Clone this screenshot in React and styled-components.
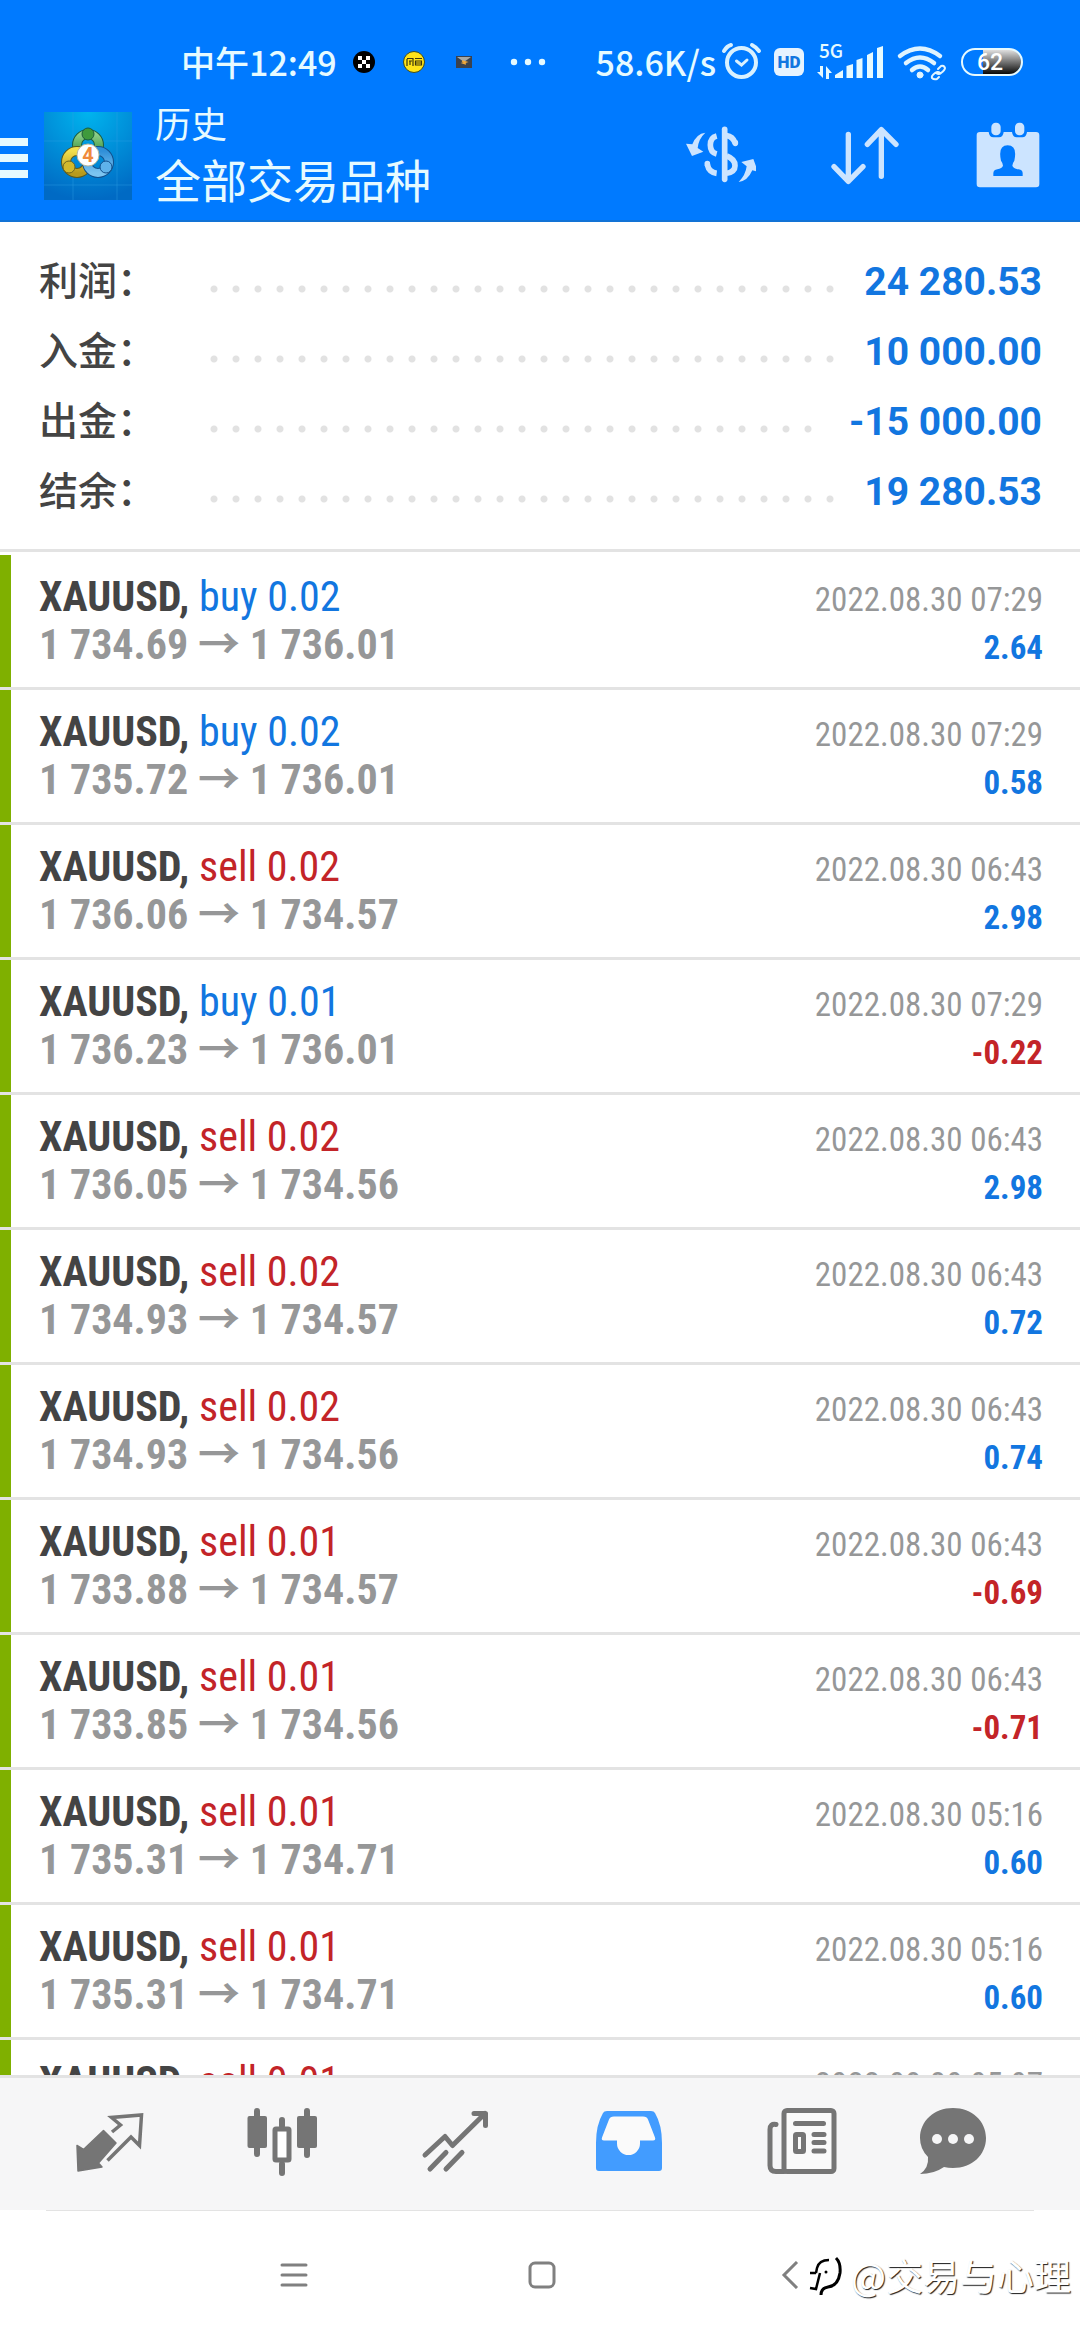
import React from 'react';
import styled, { createGlobalStyle } from 'styled-components';

const GlobalStyle = createGlobalStyle`
    * {
        box-sizing: border-box;
    }

    body {
        margin: 0;
        background: #fff;
        font-family: Roboto, 'Noto Sans CJK SC', sans-serif;
    }

    button {
        margin: 0;
        padding: 0;
        border: 0;
        background: none;
        color: inherit;
        font: inherit;
    }
`;

const Screen = styled.div`
    position: relative;
    display: flex;
    flex-direction: column;
    width: 100%;
    height: 100vh;
    overflow: hidden;
`;

const Header = styled.header`
    flex: none;
    background: #007aff;
    box-shadow: inset 0 -2px #1273d6;
    color: #e6faff;
`;

const StatusBar = styled.div`
    display: flex;
    align-items: center;
    height: 90px;
    padding: 34px 57px 0 181px;
    font-family: 'Noto Sans CJK SC', sans-serif;
    font-size: 34px;
    font-weight: 500;
    line-height: 56px;
    white-space: nowrap;
`;

const Notifications = styled.div`
    display: flex;
    align-items: center;
    gap: 28px;
    margin-left: 16px;
`;

const Speed = styled.span`
    margin: 0 4px 0 auto;
`;

const StatusIcons = styled.div`
    display: flex;
    align-items: center;
    gap: 12px;

    svg {
        overflow: visible;
    }
`;

const Toolbar = styled.div`
    display: flex;
    align-items: center;
    height: 132px;
`;

const MenuButton = styled.button`
    display: flex;
    flex-direction: column;
    gap: 8px;
    width: 28px;
    margin: 4px 16px 0 0;
`;

const MenuBar = styled.span`
    height: 8px;
    background: #e6faff;
`;

const Titles = styled.div`
    flex: 1;
    padding: 0 0 4px 23px;
`;

const Section = styled.div`
    font-size: 36px;
    line-height: 56px;
`;

const Heading = styled.h1`
    margin: 0;
    font-size: 46px;
    font-weight: 400;
    line-height: 56px;
`;

const ToolButton = styled.button`
    display: flex;
    justify-content: center;
    width: 144px;
    color: #cce4ff;
`;

const Summary = styled.dl`
    flex: none;
    margin: 0;
    padding: 24px 38px 23px 39px;
    border-bottom: 3px solid #e3e3e3;
`;

const SummaryRow = styled.div`
    display: flex;
    align-items: center;
    height: 70px;
    padding-top: 2px;
    font-size: 39px;
    line-height: 56px;
`;

const SummaryLabel = styled.dt`
    width: 164px;
    padding-bottom: 8px;
    color: #444;
    font-family: 'Noto Sans CJK SC', sans-serif;
    font-weight: 500;
`;

const Leader = styled.span`
    flex: 1;
    height: 8px;
    margin: 14px 28px 0 0;
    background: radial-gradient(circle at center, #e2e2e2 3px, transparent 4px) 0 0 / 22px 8px repeat-x;
`;

const SummaryValue = styled.dd`
    margin: 0;
    color: #1276e0;
    font-weight: 700;
`;

const DealList = styled.ul`
    flex: 1;
    min-height: 0;
    margin: 0;
    padding: 3px 0 0;
    overflow: hidden;
    list-style: none;
`;

const Deal = styled.li`
    display: flex;
    justify-content: space-between;
    height: 135px;
    padding: 18px 37px 0 39px;
    border-bottom: 3px solid #e3e3e3;
    box-shadow: inset 11px 0 #7fb000;
    font-family: 'Roboto Condensed', Roboto, 'Noto Sans CJK SC', sans-serif;
    white-space: nowrap;
`;

const DealTitle = styled.div`
    color: #444;
    font-size: 42px;
    font-weight: 700;
    line-height: 48px;
`;

const Side = styled.span`
    color: ${({ $side }) => ($side === 'buy' ? '#1276e0' : '#c32428')};
    font-weight: 400;
`;

const Prices = styled.div`
    color: #969798;
    font-size: 42px;
    font-weight: 700;
    line-height: 48px;
`;

const DealResult = styled.div`
    padding-top: 3px;
    color: #969798;
    font-size: 33px;
    line-height: 48px;
    text-align: right;
`;

const Profit = styled.div`
    color: ${({ $loss }) => ($loss ? '#c32428' : '#1276e0')};
    font-weight: 700;
`;

const Tabs = styled.nav`
    display: grid;
    flex: none;
    grid-template-columns: repeat(5, 173fr) 132fr;
    height: 135px;
    padding: 0 61px 0 22px;
    border-top: 3px solid #e3e3e3;
    background: #f6f6f7;
`;

const Tab = styled.button`
    display: flex;
    justify-content: center;
    align-items: center;
    color: ${({ $active }) => ($active ? '#429cff' : '#757575')};
`;

const SystemNav = styled.nav`
    display: flex;
    flex: none;
    justify-content: center;
    height: 130px;
    padding-left: 3px;
    background: linear-gradient(#e3e3e3, #e3e3e3) center top / calc(100% - 92px) 1px no-repeat;
`;

const SystemButton = styled.button`
    display: flex;
    justify-content: center;
    align-items: center;
    width: 248px;
    color: #808080;
`;

const Watermark = styled.div`
    position: absolute;
    right: 9px;
    bottom: 37px;
    display: flex;
    align-items: center;
    gap: 8px;
    color: #fff;
    font-family: 'Noto Sans CJK SC', sans-serif;
    font-size: 37px;
    line-height: 56px;
    text-shadow: 1px 1px 1px rgba(0, 0, 0, 0.9);
`;

const summary = [
    ['利润', '24 280.53'],
    ['入金', '10 000.00'],
    ['出金', '-15 000.00'],
    ['结余', '19 280.53'],
];

const deals = [
    { side: 'buy', lots: '0.02', from: '1 734.69', to: '1 736.01', time: '2022.08.30 07:29', profit: '2.64' },
    { side: 'buy', lots: '0.02', from: '1 735.72', to: '1 736.01', time: '2022.08.30 07:29', profit: '0.58' },
    { side: 'sell', lots: '0.02', from: '1 736.06', to: '1 734.57', time: '2022.08.30 06:43', profit: '2.98' },
    { side: 'buy', lots: '0.01', from: '1 736.23', to: '1 736.01', time: '2022.08.30 07:29', profit: '-0.22' },
    { side: 'sell', lots: '0.02', from: '1 736.05', to: '1 734.56', time: '2022.08.30 06:43', profit: '2.98' },
    { side: 'sell', lots: '0.02', from: '1 734.93', to: '1 734.57', time: '2022.08.30 06:43', profit: '0.72' },
    { side: 'sell', lots: '0.02', from: '1 734.93', to: '1 734.56', time: '2022.08.30 06:43', profit: '0.74' },
    { side: 'sell', lots: '0.01', from: '1 733.88', to: '1 734.57', time: '2022.08.30 06:43', profit: '-0.69' },
    { side: 'sell', lots: '0.01', from: '1 733.85', to: '1 734.56', time: '2022.08.30 06:43', profit: '-0.71' },
    { side: 'sell', lots: '0.01', from: '1 735.31', to: '1 734.71', time: '2022.08.30 05:16', profit: '0.60' },
    { side: 'sell', lots: '0.01', from: '1 735.31', to: '1 734.71', time: '2022.08.30 05:16', profit: '0.60' },
    { side: 'sell', lots: '0.01', from: '', to: '', time: '2022.08.30 05:07', profit: '' },
];

const NotificationIcons = () => (
    <Notifications>
        <svg width="22" height="22" viewBox="0 0 22 22">
            <circle cx="11" cy="11" r="11" fill="#000" />
            <path d="M5 5h4v4H5zM13 5h4v4h-4zM9 9h4v4H9zM5 13h4v4H5zM13 13h4v4h-4z" fill="#fff" />
        </svg>
        <svg width="22" height="22" viewBox="0 0 22 22">
            <circle cx="11" cy="11" r="10.5" fill="#ffe31a" stroke="#3c4a20" />
            <path
                d="M4 8v7M4 7.500h6V15M6 10h3M7 10v4M12 7.500h7M12.500 10h6v4h-6zM13 12h5"
                fill="none"
                stroke="#3a3510"
                strokeWidth="1.200"
            />
        </svg>
        <svg width="22" height="22" viewBox="0 0 22 22">
            <path d="M3 5h16v12H3z" fill="#3b424e" />
            <path d="M4 6h14l-7 5z" fill="#a7a9a6" />
            <path d="M9 10l4 1-3 1 3 1" fill="none" stroke="#f0a83a" strokeWidth="1.500" />
        </svg>
        <svg width="50" height="8" viewBox="0 0 50 8" fill="#e6faff">
            <circle cx="11" cy="4" r="3.200" />
            <circle cx="25" cy="4" r="3.200" />
            <circle cx="39" cy="4" r="3.200" />
        </svg>
    </Notifications>
);

const AlarmIcon = () => (
    <svg width="42" height="40" viewBox="720 43 42 40" fill="none" stroke="#d9f1ff" strokeWidth="4" strokeLinecap="round">
        <circle cx="741.500" cy="63.500" r="14.500" />
        <path d="M724 52q3-5 7-6M752 46q4 2 7 6" />
        <path d="M736.500 62l5 4 5.500-5" strokeWidth="3" />
    </svg>
);

const HdIcon = () => (
    <svg width="31" height="30" viewBox="0 0 31 30">
        <rect x="0" y="1" width="30" height="28" rx="6" fill="#e6f3ff" />
        <text x="15" y="21" textAnchor="middle" fontFamily="Roboto" fontSize="17" fontWeight="900" fill="#1276e0">HD</text>
    </svg>
);

const SignalIcon = () => (
    <svg width="68" height="40" viewBox="817 42 68 40" fill="#e6faff">
        <text x="819" y="58" fontFamily="Noto Sans CJK SC" fontSize="19" fontWeight="500">5G</text>
        <path d="M820 66h3v12l-6-6h3zM826 79V66l6 7h-3v6z" />
        <path d="M835 75l8-5v8h-8zM846.500 66l6.500-2v14h-6.500zM856.500 60l6-2v20h-6zM867 55l6-3v26h-6zM877 48l6-2v32h-6z" />
    </svg>
);

const WifiIcon = () => (
    <svg width="52" height="40" viewBox="897 42 52 40" fill="none" stroke="#e0f4ff" strokeLinecap="round">
        <path d="M900 56q20-15 40 0M906 63q14-11 28 0M912 70q8-7 16 0" strokeWidth="4.500" />
        <circle cx="920" cy="75" r="3" fill="#e0f4ff" />
        <path
            d="M938 69l3-3q3-1 4 2 0 2-4 5-2 2-5 0M940 73q-2-2-5 0-4 3-3 5 2 2 5 1l2-2"
            strokeWidth="2"
        />
    </svg>
);

const BatteryIcon = () => (
    <svg width="62" height="30" viewBox="0 0 62 30">
        <defs>
            <linearGradient id="charge" x1="0" y1="0" x2="0" y2="1">
                <stop offset="0" stopColor="#e8e8e8" />
                <stop offset="1" stopColor="#000" />
            </linearGradient>
        </defs>
        <path d="M22 2h25a13 13 0 0 1 0 26H22z" fill="url(#charge)" />
        <rect x="1" y="2" width="60" height="26" rx="13" fill="none" stroke="#e6faff" strokeWidth="2" />
        <text x="29" y="23" textAnchor="middle" fontFamily="Roboto" fontSize="23" fontWeight="500" fill="#fff">62</text>
    </svg>
);

const AppLogo = () => (
    <svg width="88" height="88" viewBox="0 0 88 88">
        <defs>
            <radialGradient id="logoSky" cx="0.500" cy="0" r="1">
                <stop offset="0" stopColor="#00b4ee" />
                <stop offset="1" stopColor="#006ac4" />
            </radialGradient>
            <linearGradient id="logoGreen" x1="0" y1="0" x2="0" y2="1">
                <stop offset="0" stopColor="#8ed08a" />
                <stop offset="1" stopColor="#2e8a34" />
            </linearGradient>
            <linearGradient id="logoYellow" x1="0" y1="0" x2="0" y2="1">
                <stop offset="0" stopColor="#f2df4e" />
                <stop offset="1" stopColor="#b79a1c" />
            </linearGradient>
            <linearGradient id="logoBlue" x1="0" y1="0" x2="0" y2="1">
                <stop offset="0" stopColor="#2f8fd8" />
                <stop offset="1" stopColor="#7cc4f0" />
            </linearGradient>
        </defs>
        <rect width="88" height="88" fill="url(#logoSky)" />
        <path d="M29 0v88M73 0v88M0 29h88M0 73h88" stroke="#2fa0e8" strokeOpacity="0.400" />
        <circle cx="44" cy="33" r="11" fill="none" stroke="#1d5c3c" strokeWidth="10" />
        <circle cx="44" cy="33" r="11" fill="none" stroke="url(#logoGreen)" strokeWidth="8" />
        <circle cx="33" cy="50" r="11" fill="none" stroke="#5b5a1c" strokeWidth="10" />
        <circle cx="33" cy="50" r="11" fill="none" stroke="url(#logoYellow)" strokeWidth="8" />
        <circle cx="54" cy="50" r="11" fill="none" stroke="#12508c" strokeWidth="10" />
        <circle cx="54" cy="50" r="11" fill="none" stroke="url(#logoBlue)" strokeWidth="8" />
        <circle cx="44" cy="22" r="6" fill="#3f9a3c" stroke="#1d5c3c" />
        <circle cx="25" cy="55" r="6" fill="#d2b92c" stroke="#6b6420" />
        <circle cx="62" cy="55" r="6" fill="#5fb2ea" stroke="#12508c" />
        <circle cx="44" cy="43" r="11" fill="#fff" stroke="#b8b8a0" />
        <text x="44" y="50" textAnchor="middle" fontFamily="Roboto" fontSize="20" fontWeight="700" fill="#f08a3c">4</text>
    </svg>
);

const CurrencyIcon = () => (
    <svg width="72" height="72" viewBox="42 60 216 216" fill="none" stroke="currentColor">
        <path d="M164 88v150" strokeWidth="17" strokeLinecap="round" />
        <path d="M140 108q-19 5-19 27t19 27" strokeWidth="17" />
        <path d="M112 194q5 23 28 26" strokeWidth="17" />
        <path d="M112 191v2M196 128v2" strokeWidth="17" strokeLinecap="round" />
        <path d="M170 107q18 2 26 23M170 168q25 9 25 29 0 18-25 23" strokeWidth="17" />
        <path d="M106 98q-27 3-39 35l-19-2 18 37 34-13-17-11q3-28 23-46z" fill="currentColor" stroke="none" />
        <path d="M206 246q27-3 41-35l17 4-14-38-36 9 16 13q-3 26-24 47z" fill="currentColor" stroke="none" />
    </svg>
);

const SortIcon = () => (
    <svg
        width="72"
        height="72"
        viewBox="474 60 216 216"
        fill="none"
        stroke="currentColor"
        strokeWidth="16"
        strokeLinecap="round"
        strokeLinejoin="round"
    >
        <path d="M535 103v141M492 200l43 44 44-44M634 229V89M592 133l42-44 44 44" />
    </svg>
);

const CalendarIcon = () => (
    <svg width="72" height="72" viewBox="906 60 216 216" fill="currentColor">
        <rect x="964" y="68" width="28" height="38" rx="13" />
        <rect x="1035" y="68" width="28" height="38" rx="13" />
        <path
            fillRule="evenodd"
            d="M930 96h26q2 16 14 16h17q12 0 14-16h25q2 16 14 16h17q12 0 14-16h27q10 0 10 10v146q0 10-10 10H930q-10 0-10-10V106q0-10 10-10zM970 228h88v-8q0-10-12-12-16-3-19-11 0-7 6-15 10-46-20-46t-20 46q6 8 6 15-3 8-17 11-12 2-12 12z"
        />
    </svg>
);

const QuotesIcon = () => (
    <svg width="72" height="72" viewBox="72 2108 72 72">
        <path
            d="M76 2145.500l6.500 4 20-19 12.500 12.500-17.500 20 3.500 4-24 4z"
            fill="currentColor"
            stroke="currentColor"
            strokeWidth="1.500"
            strokeLinejoin="round"
        />
        <path
            d="M111 2132l8.500-7-9-7.500 30-2.500-2 30.500-8.500-8.500-23.500 23.500"
            fill="none"
            stroke="currentColor"
            strokeWidth="3.500"
            strokeLinejoin="miter"
        />
    </svg>
);

const ChartIcon = () => (
    <svg width="72" height="72" viewBox="245 2108 72 72" fill="none" stroke="currentColor" strokeWidth="6" strokeLinecap="round">
        <path d="M256 2111v43M306 2111v44M281 2120v6M281 2164v9" />
        <rect x="246.500" y="2116" width="19.500" height="32" rx="2" fill="currentColor" stroke="none" />
        <rect x="296" y="2116" width="20" height="32" rx="2" fill="currentColor" stroke="none" />
        <rect x="274" y="2129" width="14" height="31" strokeWidth="5" rx="1" fill="#fff" />
    </svg>
);

const TrendIcon = () => (
    <svg
        width="72"
        height="72"
        viewBox="418 2108 72 72"
        fill="none"
        stroke="currentColor"
        strokeWidth="5"
        strokeLinecap="round"
        strokeLinejoin="round"
    >
        <path d="M424 2155l20-18.500 7.500 9L484 2113.500M473 2113.500h11.500v12M429 2169l16-16.500M445 2169l16-16.500" />
    </svg>
);

const InboxIcon = () => (
    <svg width="72" height="72" viewBox="591 2108 72 72">
        <path
            d="M606 2111h44q3 0 4 2 7 12 7 30v25q0 3-3 3h-60q-3 0-3-3v-25q0-18 7-30 1-2 4-2z"
            fill="currentColor"
        />
        <path
            d="M613 2116.500h29q4 0 5 3l7 18q1 3-2 3h-13v3a11.500 11.500 0 0 1-23 0v-3h-13q-3 0-2-3l7-18q1-3 5-3z"
            fill="#fafafa"
        />
    </svg>
);

const NewsIcon = () => (
    <svg width="72" height="72" viewBox="764 2108 72 72" fill="none" stroke="currentColor" strokeWidth="5" strokeLinecap="round">
        <path d="M775 2124.500q-6-1-6 5v36q0 6 6 6h8" />
        <rect x="783" y="2110.500" width="50" height="61" rx="3" fill="#fafafa" />
        <path d="M794.500 2123.500h28M813 2134.500h10M813 2142.500h10M813 2151h10" />
        <rect x="794.500" y="2134.500" width="8" height="17" rx="1" />
    </svg>
);

const ChatIcon = () => (
    <svg width="72" height="72" viewBox="917 2108 72 72">
        <path
            d="M953 2108c19 0 33 13 33 30s-14 30-33 30q-5 0-9-1-10 7-24 7 9-6 8-17-8-8-8-19c0-17 14-30 33-30z"
            fill="currentColor"
        />
        <g fill="#f6f6f7">
            <circle cx="937" cy="2139" r="5" />
            <circle cx="953" cy="2139" r="5" />
            <circle cx="969" cy="2139" r="5" />
        </g>
    </svg>
);

const tabs = [
    ['行情', QuotesIcon],
    ['图表', ChartIcon],
    ['交易', TrendIcon],
    ['历史', InboxIcon],
    ['新闻', NewsIcon],
    ['消息', ChatIcon],
];

const App = () => {
    return (
        <Screen lang="zh-CN">
            <GlobalStyle />
            <Header>
                <StatusBar>
                    中午12:49
                    <NotificationIcons />
                    <Speed>58.6K/s</Speed>
                    <StatusIcons>
                        <AlarmIcon />
                        <HdIcon />
                        <SignalIcon />
                        <WifiIcon />
                        <BatteryIcon />
                    </StatusIcons>
                </StatusBar>
                <Toolbar>
                    <MenuButton aria-label="菜单">
                        <MenuBar />
                        <MenuBar />
                        <MenuBar />
                    </MenuButton>
                    <AppLogo />
                    <Titles>
                        <Section>历史</Section>
                        <Heading>全部交易品种</Heading>
                    </Titles>
                    <ToolButton aria-label="货币"><CurrencyIcon /></ToolButton>
                    <ToolButton aria-label="排序"><SortIcon /></ToolButton>
                    <ToolButton aria-label="日期"><CalendarIcon /></ToolButton>
                </Toolbar>
            </Header>
            <Summary>
                {summary.map(([label, value]) => (
                    <SummaryRow key={label}>
                        <SummaryLabel>{`${label}\uff1a`}</SummaryLabel>
                        <Leader />
                        <SummaryValue>{value}</SummaryValue>
                    </SummaryRow>
                ))}
            </Summary>
            <DealList>
                {deals.map((deal, index) => (
                    <Deal key={index}>
                        <div>
                            <DealTitle>
                                XAUUSD, <Side $side={deal.side}>{deal.side} {deal.lots}</Side>
                            </DealTitle>
                            {deal.from && <Prices>{deal.from} → {deal.to}</Prices>}
                        </div>
                        <DealResult>
                            <div>{deal.time}</div>
                            <Profit $loss={deal.profit.startsWith('-')}>{deal.profit}</Profit>
                        </DealResult>
                    </Deal>
                ))}
            </DealList>
            <Tabs>
                {tabs.map(([label, Icon]) => (
                    <Tab key={label} aria-label={label} $active={label === '历史'}>
                        <Icon />
                    </Tab>
                ))}
            </Tabs>
            <SystemNav>
                <SystemButton aria-label="最近任务">
                    <svg width="28" height="28" viewBox="0 0 28 28" stroke="currentColor" strokeWidth="3" strokeLinecap="round">
                        <path d="M2 4h24M2 14h24M2 24h24" />
                    </svg>
                </SystemButton>
                <SystemButton aria-label="主屏幕">
                    <svg width="28" height="28" viewBox="0 0 28 28" fill="none" stroke="currentColor" strokeWidth="3">
                        <rect x="2" y="2" width="24" height="24" rx="5" />
                    </svg>
                </SystemButton>
                <SystemButton aria-label="返回">
                    <svg width="28" height="28" viewBox="0 0 28 28" fill="none" stroke="currentColor" strokeWidth="3">
                        <path d="M21 1L8 14l13 13" />
                    </svg>
                </SystemButton>
            </SystemNav>
            <Watermark>
                <svg width="34" height="44" viewBox="0 0 34 44" fill="none" stroke="#000">
                    <path d="M20 7q-10 0-12 8l-1 5M1 20h6M11 20L7 36l-6-1" strokeWidth="2.500" />
                    <path d="M27 5q5 5 4 15-2 13-12 14-7 1-7 8" strokeWidth="3" />
                    <circle cx="17" cy="19" r="1.500" fill="#000" stroke="none" />
                </svg>
                @交易与心理
            </Watermark>
        </Screen>
    );
};

export default App;
